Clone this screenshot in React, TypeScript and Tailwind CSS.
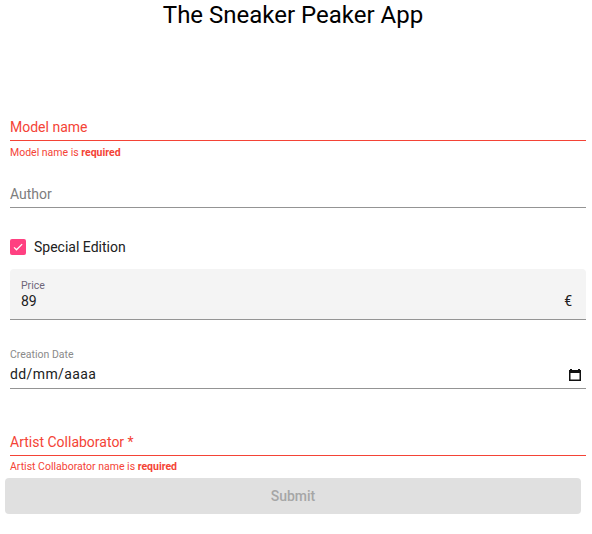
import { useState } from 'react';

function CalendarIcon() {
  return (
    <svg width="12" height="13" viewBox="0 0 12 13" className="shrink-0">
      <rect x="1" y="1" width="2" height="2" fill="#111" />
      <rect x="9" y="1" width="2" height="2" fill="#111" />
      <rect x="0.75" y="2.75" width="10.5" height="9.5" fill="none" stroke="#111" strokeWidth="1.5" />
      <rect x="0" y="2" width="12" height="3" fill="#111" />
    </svg>
  );
}

export default function App() {
  const [special, setSpecial] = useState(true);

  return (
    <div className="w-[592px] h-[534px] bg-white font-['Roboto',sans-serif] text-black">
      {/* Title */}
      <h1 className="pr-[6px] text-center text-[24px] leading-[30px] font-normal">The Sneaker Peaker App</h1>

      <form className="flex flex-col px-[10px] pr-[6px]" onSubmit={(e) => e.preventDefault()}>
        {/* Model name (invalid) */}
        <div className="mt-[87px] border-b border-[#f44336] pb-[3px]">
          <div className="text-[14px] leading-[20px] text-[#f44336]">Model name</div>
        </div>
        <div className="mt-[5px] text-[10.5px] leading-[14px] text-[#f44336]">
          Model name is <strong className="font-bold">required</strong>
        </div>

        {/* Author */}
        <div className="mt-[24px] border-b border-[#949494] pb-[3px]">
          <div className="text-[14px] leading-[20px] text-[#7d7d7d]">Author</div>
        </div>

        {/* Special edition */}
        <label className="mt-[29px] flex items-center gap-[8px] cursor-pointer">
          <span
            onClick={() => setSpecial(!special)}
            className={`w-[16px] h-[16px] rounded-[2px] flex items-center justify-center ${special ? 'bg-[#ff4081]' : 'border-2 border-[#757575]'}`}
          >
            {special && (
              <svg width="12" height="12" viewBox="0 0 24 24" fill="none" stroke="white" strokeWidth={2.6}>
                <path d="M4.1 12.7L9 17.6 20.3 6.3" />
              </svg>
            )}
          </span>
          <span className="text-[14px] leading-[20px] text-[#212121]">Special Edition</span>
        </label>

        {/* Price (filled) */}
        <div className="mt-[12px] bg-[#f4f4f4] rounded-t-[4px] border-b border-[#949494] pl-[11px] pr-[14px] pt-[11px] pb-[8px]">
          <div className="text-[10.5px] leading-[12px] text-[#6f6679]">Price</div>
          <div className="-mt-px flex justify-between text-[14px] leading-[20px] text-[#212121]">
            <span>89</span>
            <span>€</span>
          </div>
        </div>

        {/* Creation date */}
        <div className="mt-[29px] border-b border-[#949494] pb-[4px]">
          <div className="text-[10.5px] leading-[12px] text-[#8a8a8a]">Creation Date</div>
          <div className="mt-[3px] flex items-center justify-between pr-[5px] text-[14px] leading-[20px] text-[#212121]">
            <span className="tracking-[0.4px]">dd/mm/aaaa</span>
            <CalendarIcon />
          </div>
        </div>

        {/* Artist collaborator (invalid) */}
        <div className="mt-[43px] border-b border-[#f44336] pb-[3px]">
          <div className="text-[14px] leading-[20px] text-[#f44336]">Artist Collaborator *</div>
        </div>
        <div className="mt-[4px] text-[10.5px] leading-[14px] text-[#f44336]">
          Artist Collaborator name is <strong className="font-bold">required</strong>
        </div>

        <button
          type="submit"
          disabled
          className="mt-[4px] -ml-[5px] w-[576px] h-[36px] rounded-[4px] bg-[#e0e0e0] text-[14px] font-medium text-[#a6a6a6]"
        >
          Submit
        </button>
      </form>
    </div>
  );
}
